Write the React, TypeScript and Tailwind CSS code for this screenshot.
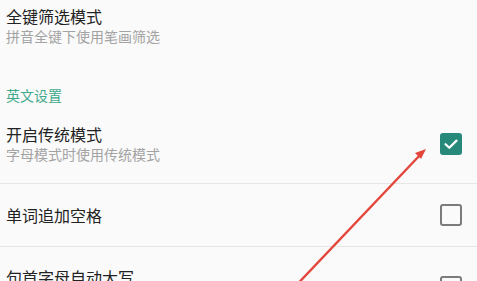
import React from 'react';

/** A single preference row with optional summary and a checkbox on the right. */
function PrefRow({
  title,
  summary,
  checked,
}: {
  title: string;
  summary?: string;
  checked?: boolean;
}) {
  return (
    <div
      className={
        summary
          ? 'flex items-center justify-between pl-[6px] pr-[15px] pt-[20px] pb-[19px]'
          : 'flex items-center justify-between pl-[6px] pr-[15px] h-[62px]'
      }
    >
      <div className="flex flex-col">
        <div className="text-[16px] leading-[21px] text-[#222222]">{title}</div>
        {summary && (
          <div className="text-[14px] leading-[19px] text-[#a3a3a3]">{summary}</div>
        )}
      </div>
      {checked ? (
        <div className="w-[22px] h-[22px] rounded-[3px] bg-[#27897a] flex items-center justify-center">
          <svg width="22" height="22" viewBox="0 0 22 22">
            <path
              d="M5.5 11.2 L9.3 14.8 L16.5 7.6"
              fill="none"
              stroke="#ffffff"
              strokeWidth="2.2"
              strokeLinecap="round"
              strokeLinejoin="round"
            />
          </svg>
        </div>
      ) : (
        <div className="w-[22px] h-[22px] rounded-[3px] border-[2px] border-[#7b7b7b]" />
      )}
    </div>
  );
}

export default function App() {
  return (
    <div
      className="relative w-full h-[281px] overflow-hidden bg-[#fafafa]"
      style={{ fontFamily: '"Noto Sans CJK SC", "Noto Sans", sans-serif' }}
    >
      {/* 全键筛选模式 */}
      <div className="pl-[6px] pt-[6px]">
        <div className="text-[16px] leading-[21px] text-[#222222]">全键筛选模式</div>
        <div className="text-[14px] leading-[19px] text-[#a3a3a3]">拼音全键下使用笔画筛选</div>
      </div>

      {/* Category header */}
      <div className="mt-[40px] pl-[6px] text-[14px] leading-[18px] text-[#3ea98b]">英文设置</div>

      <PrefRow title="开启传统模式" summary="字母模式时使用传统模式" checked />
      <div className="h-px bg-[#e6e6e6]" />
      <PrefRow title="单词追加空格" />
      <div className="h-px bg-[#e6e6e6]" />
      <PrefRow title="句首字母自动大写" summary="英文句子首字母自动大写" />

      {/* red annotation arrow */}
      <svg
        className="absolute inset-0 pointer-events-none"
        width="477"
        height="281"
        viewBox="0 0 477 281"
      >
        <line x1="288" y1="294" x2="421" y2="154" stroke="#e3473c" strokeWidth="2.4" />
        <polygon points="426,149 415,153 421,159" fill="#e3473c" />
      </svg>
    </div>
  );
}
